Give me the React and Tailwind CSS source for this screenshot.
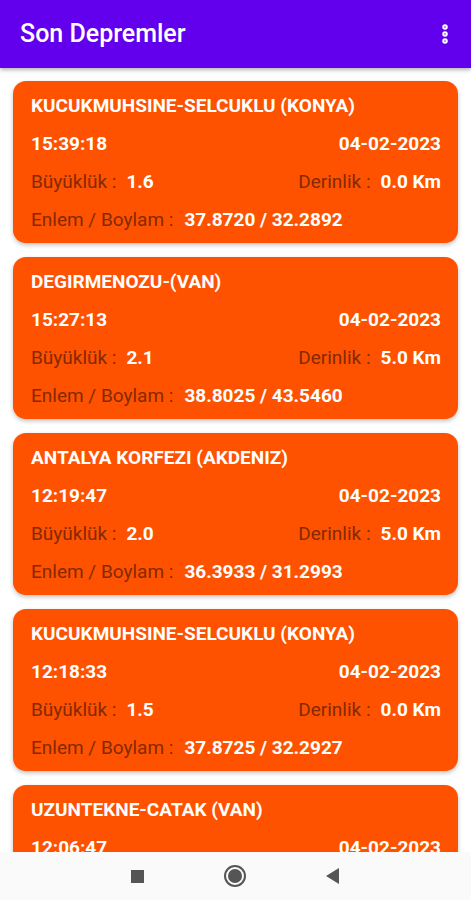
import { MoreVertical } from 'lucide-react';

const quakes = [
  { place: 'KUCUKMUHSINE-SELCUKLU (KONYA)', time: '15:39:18', date: '04-02-2023', mag: '1.6', depth: '0.0 Km', coords: '37.8720 / 32.2892' },
  { place: 'DEGIRMENOZU-(VAN)', time: '15:27:13', date: '04-02-2023', mag: '2.1', depth: '5.0 Km', coords: '38.8025 / 43.5460' },
  { place: 'ANTALYA KORFEZI (AKDENIZ)', time: '12:19:47', date: '04-02-2023', mag: '2.0', depth: '5.0 Km', coords: '36.3933 / 31.2993' },
  { place: 'KUCUKMUHSINE-SELCUKLU (KONYA)', time: '12:18:33', date: '04-02-2023', mag: '1.5', depth: '0.0 Km', coords: '37.8725 / 32.2927' },
  { place: 'UZUNTEKNE-CATAK (VAN)', time: '12:06:47', date: '04-02-2023', mag: '1.8', depth: '7.0 Km', coords: '38.0000 / 43.0000' },
];

function QuakeCard({ q }) {
  return (
    <div className="bg-[#ff5200] rounded-[13px] shadow-[0_2px_4px_rgba(0,0,0,0.25)] pl-[18px] pr-[17px] pt-[6px] pb-[4px] shrink-0">
      <div className="h-[38px] flex items-center text-white font-bold text-[19px] whitespace-nowrap">{q.place}</div>
      <div className="h-[38px] flex items-center justify-between text-white font-bold text-[19px]">
        <span>{q.time}</span>
        <span>{q.date}</span>
      </div>
      <div className="h-[38px] flex items-center justify-between text-[19px]">
        <span><span className="text-[#842900]">Büyüklük :</span><span className="text-white font-bold ml-[10px]">{q.mag}</span></span>
        <span><span className="text-[#842900]">Derinlik :</span><span className="text-white font-bold ml-[10px]">{q.depth}</span></span>
      </div>
      <div className="h-[38px] flex items-center text-[19px] whitespace-nowrap">
        <span className="text-[#842900]">Enlem / Boylam :</span><span className="text-white font-bold ml-[11px]">{q.coords}</span>
      </div>
    </div>
  );
}

export default function App() {
  return (
    <div className="w-[471px] h-[900px] bg-white flex flex-col overflow-hidden" style={{ fontFamily: 'Roboto, "Liberation Sans", sans-serif' }}>
      <div className="h-[68px] bg-[#6200ee] flex items-center justify-between pl-[20px] pr-[14px] shadow-[0_2px_4px_rgba(0,0,0,0.3)] z-10 shrink-0">
        <span className="text-white text-[25px] font-medium">Son Depremler</span>
        <MoreVertical className="w-6 h-6 text-white" strokeWidth={3.5} />
      </div>
      <div className="flex-1 overflow-hidden flex flex-col gap-[14px] px-[13px] pt-[13px]">
        {quakes.map((q, i) => <QuakeCard key={i} q={q} />)}
      </div>
      <div className="h-[48px] bg-[#fafafa] flex items-center justify-center gap-[80px] shrink-0">
        <div className="w-[13px] h-[13px] bg-[#555]" />
        <div className="w-[22px] h-[22px] rounded-full border-2 border-[#555] flex items-center justify-center">
          <div className="w-[14px] h-[14px] rounded-full bg-[#555]" />
        </div>
        <svg width="14" height="16" viewBox="0 0 14 16"><polygon points="13,0 13,16 0,8" fill="#555" /></svg>
      </div>
    </div>
  );
}
